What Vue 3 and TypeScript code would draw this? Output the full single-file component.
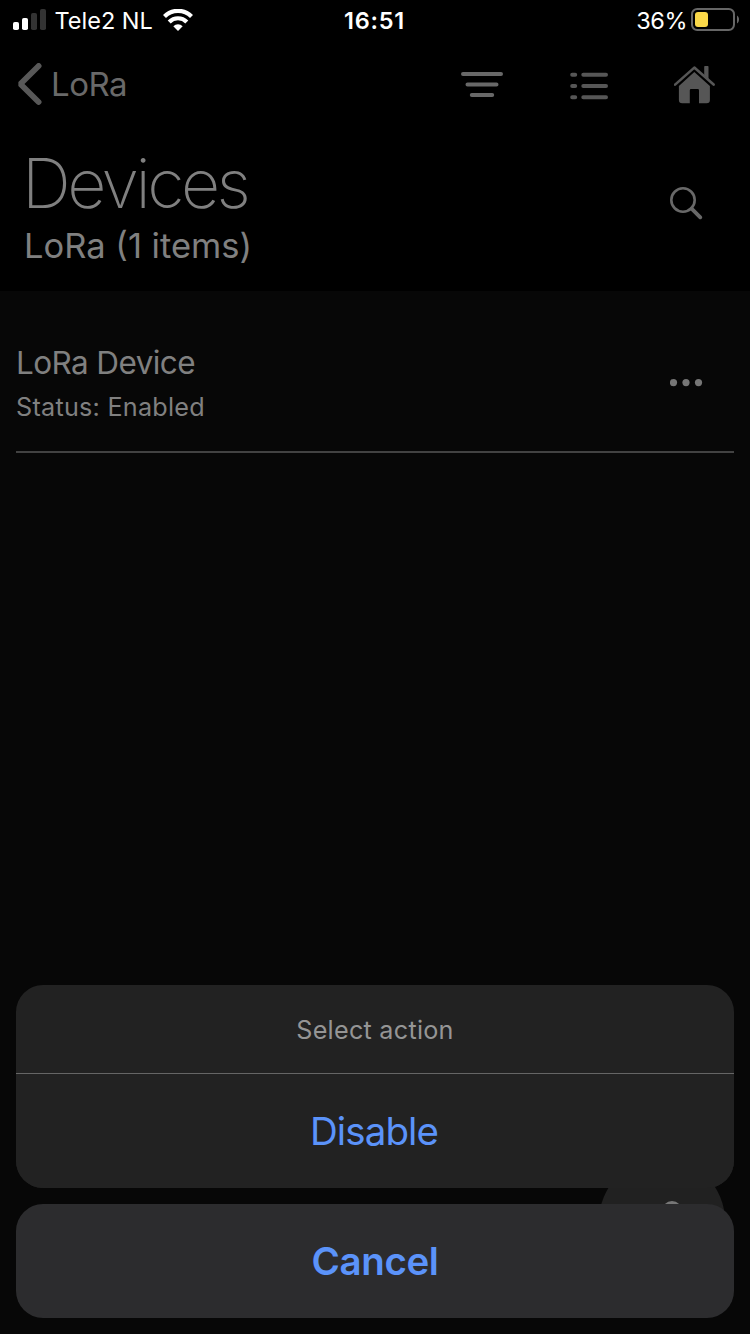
<script setup lang="ts">
import { ref } from 'vue'

interface Device {
  name: string
  status: string
}

const carrier = 'Tele2 NL'
const time = '16:51'
const battery = 36
const devices: Device[] = [{ name: 'LoRa Device', status: 'Enabled' }]
const sheetOpen = ref(true)
</script>

<template>
  <div class="screen">
    <header class="top">
      <div class="status-bar">
        <div class="status-left">
          <svg class="signal" width="34" height="22" viewBox="0 0 34 22">
            <rect x="0" y="13" width="6" height="8" rx="1.8" fill="#fff" />
            <rect x="9" y="9" width="6" height="12" rx="1.8" fill="#fff" />
            <rect x="18" y="4" width="6" height="17" rx="1.8" fill="#333" />
            <rect x="27" y="0" width="6" height="21" rx="1.8" fill="#333" />
          </svg>
          <span class="carrier">{{ carrier }}</span>
          <svg class="wifi" width="30" height="22" viewBox="0 0 30 22">
            <g fill="none" stroke="#fff" stroke-width="4.2">
              <path d="M1.5 7.4A19.1 19.1 0 0 1 28.5 7.4" />
              <path d="M6.2 12.9A12.4 12.4 0 0 1 23.8 12.9" />
            </g>
            <path d="M10.3 17.2A6.9 6.9 0 0 1 19.7 17.2L15 22Z" fill="#fff" />
          </svg>
        </div>
        <span class="time">{{ time }}</span>
        <div class="status-right">
          <span class="percent">{{ battery }}%</span>
          <svg class="battery" width="49" height="24" viewBox="0 0 49 24">
            <rect x="1" y="1" width="42" height="21" rx="5.2" fill="none" stroke="#666" stroke-width="2" />
            <path d="M46 7.5C48.7 9 48.7 14 46 15.5Z" fill="#666" />
            <rect x="4" y="4" width="13" height="15" rx="3" fill="#fad849" />
          </svg>
        </div>
      </div>

      <nav class="nav">
        <div class="back">
          <svg width="26" height="42" viewBox="0 0 26 42">
            <path d="M21.6 3L3.4 21L21.6 39" fill="none" stroke="#585858" stroke-width="5.8" stroke-linecap="round" stroke-linejoin="bevel" />
          </svg>
          <span class="back-label">LoRa</span>
        </div>
        <div class="actions">
          <svg width="42" height="26" viewBox="0 0 42 26">
            <g stroke="#686868" stroke-width="4" stroke-linecap="round">
              <path d="M2 3H40M6.5 13.5H35.5M10.8 24H31.2" />
            </g>
          </svg>
          <svg class="list-icon" width="38" height="28" viewBox="0 0 38 28">
            <g stroke="#565656" stroke-width="4" stroke-linecap="round">
              <path d="M2.2 2.8H5.2M13.3 2.8H36M2.2 14H5.2M13.3 14H36M2.2 25.2H5.2M13.3 25.2H36" />
            </g>
          </svg>
          <svg class="home-icon" width="42" height="38" viewBox="0 0 42 38">
            <path d="M1.1 18.6L20.3 1.6L39.6 18.6" fill="none" stroke="#565656" stroke-width="2.6" stroke-linecap="round" stroke-linejoin="round" />
            <path d="M30.2 .7Q30.2 0 31 0H33.8Q34.5 0 34.5 .7V13.6L30.2 9.8Z" fill="#565656" />
            <path d="M20.3 6L35.9 20V34Q35.9 37.2 32.6 37.2H25V24.2Q25 23 23.8 23H17Q15.8 23 15.8 24.2V37.2H8.2Q4.9 37.2 4.9 34V20Z" fill="#565656" />
          </svg>
        </div>
      </nav>

      <div class="title-row">
        <div>
          <h1>Devices</h1>
          <p class="subtitle">LoRa ({{ devices.length }} items)</p>
        </div>
        <svg class="search" width="33" height="33" viewBox="0 0 33 33">
          <circle cx="13" cy="13" r="11.7" fill="none" stroke="#686868" stroke-width="2.6" />
          <path d="M21.6 21.6L30.3 30.3" stroke="#686868" stroke-width="3.8" stroke-linecap="round" />
        </svg>
      </div>
    </header>

    <main class="list">
      <div v-for="device in devices" :key="device.name" class="item">
        <div>
          <div class="item-name">{{ device.name }}</div>
          <div class="item-status">Status: {{ device.status }}</div>
        </div>
        <svg width="34" height="8" viewBox="0 0 34 8" fill="#767676">
          <circle cx="3.5" cy="3.6" r="3.6" />
          <circle cx="16" cy="3.6" r="3.6" />
          <circle cx="28.5" cy="3.6" r="3.6" />
        </svg>
      </div>
    </main>

    <div class="fab"><i class="fab-glyph"></i></div>

    <div v-if="sheetOpen" class="sheet">
      <section class="panel">
        <div class="sheet-title"><span>Select action</span></div>
        <button class="choice" @click="sheetOpen = false"><span>Disable</span></button>
      </section>
      <button class="cancel" @click="sheetOpen = false"><span>Cancel</span></button>
    </div>
  </div>
</template>

<style>
body {
  margin: 0;
  background: #070707;
}
</style>

<style scoped>
.screen {
  position: relative;
  width: 750px;
  height: 1334px;
  overflow: hidden;
  background: #070707;
  font-family: Inter, "Liberation Sans", sans-serif;
  color: #808080;
}
svg {
  display: block;
  flex: none;
}
.top {
  height: 291px;
  background: #000;
}
.status-bar {
  display: grid;
  grid-template-columns: 1fr auto 1fr;
  height: 41px;
  padding: 0 10px 0 13px;
  color: #fff;
  font-size: 23.5px;
  line-height: 41px;
  white-space: nowrap;
}
.status-left,
.status-right {
  display: flex;
}
.status-right {
  justify-content: flex-end;
}
.signal {
  margin-top: 9px;
}
.carrier {
  width: 108px;
  margin-left: 7.5px;
}
.wifi {
  margin-top: 9px;
}
.time {
  margin: 0 2px 0 -2px;
  font-weight: 600;
  letter-spacing: 0.8px;
}
.percent {
  margin-right: 4px;
  letter-spacing: -0.5px;
}
.battery {
  margin-top: 8px;
}
.nav {
  display: flex;
  justify-content: space-between;
  align-items: center;
  height: 86px;
  padding: 0 34px 0 17px;
}
.back {
  display: flex;
  align-items: center;
  color: #696969;
}
.back-label {
  margin-left: 8px;
  font-size: 33px;
  line-height: 40px;
  letter-spacing: -0.5px;
}
.actions {
  display: flex;
  align-items: center;
}
.list-icon {
  margin: 3px 66px 0 67px;
}
.home-icon {
  margin-top: 2px;
}
.title-row {
  display: flex;
  justify-content: space-between;
  padding: 19px 47px 0 24px;
}
h1 {
  margin: 0 0 0 -2px;
  font-size: 68px;
  font-weight: 200;
  line-height: 74px;
  letter-spacing: -3.5px;
}
.subtitle {
  margin: 0;
  font-size: 34.5px;
  line-height: 51px;
}
.search {
  margin-top: 41px;
}
.list {
  padding: 0 16px;
}
.item {
  display: flex;
  justify-content: space-between;
  align-items: center;
  height: 160px;
  padding-right: 30px;
  border-bottom: 2px solid #424242;
}
.item-name {
  margin-top: 27px;
  font-size: 31.5px;
  line-height: 44px;
  letter-spacing: -0.6px;
}
.item-status {
  font-size: 25.2px;
  line-height: 44px;
  letter-spacing: 0.25px;
}
.item svg {
  margin-top: 23px;
}
.fab {
  position: absolute;
  left: 599px;
  top: 1158px;
  width: 126px;
  height: 126px;
  border-radius: 50%;
  background: #212121;
}
.fab-glyph {
  position: absolute;
  left: 63px;
  top: 43px;
  width: 20px;
  height: 20px;
  border-radius: 50%;
  background: #777;
}
.sheet {
  position: absolute;
  left: 16px;
  right: 16px;
  bottom: 16px;
  display: flex;
  flex-direction: column;
  gap: 16px;
}
.panel {
  overflow: hidden;
  border-radius: 27px;
  background: #222;
}
.sheet-title {
  height: 88px;
  border-bottom: 1px solid #666;
  color: #959595;
  font-size: 25.2px;
  line-height: 90px;
  letter-spacing: 0.25px;
  text-align: center;
}
button {
  display: block;
  width: 100%;
  height: 114px;
  padding: 0;
  border: 0;
  color: #5b93fa;
  font-family: inherit;
  font-size: 38.5px;
  line-height: 114px;
  text-align: center;
}
.choice {
  padding-right: 2px;
  background: #222;
  letter-spacing: -0.9px;
}
.cancel {
  border-radius: 27px;
  background: #2c2c2e;
  font-weight: 600;
  letter-spacing: -0.4px;
}
</style>
